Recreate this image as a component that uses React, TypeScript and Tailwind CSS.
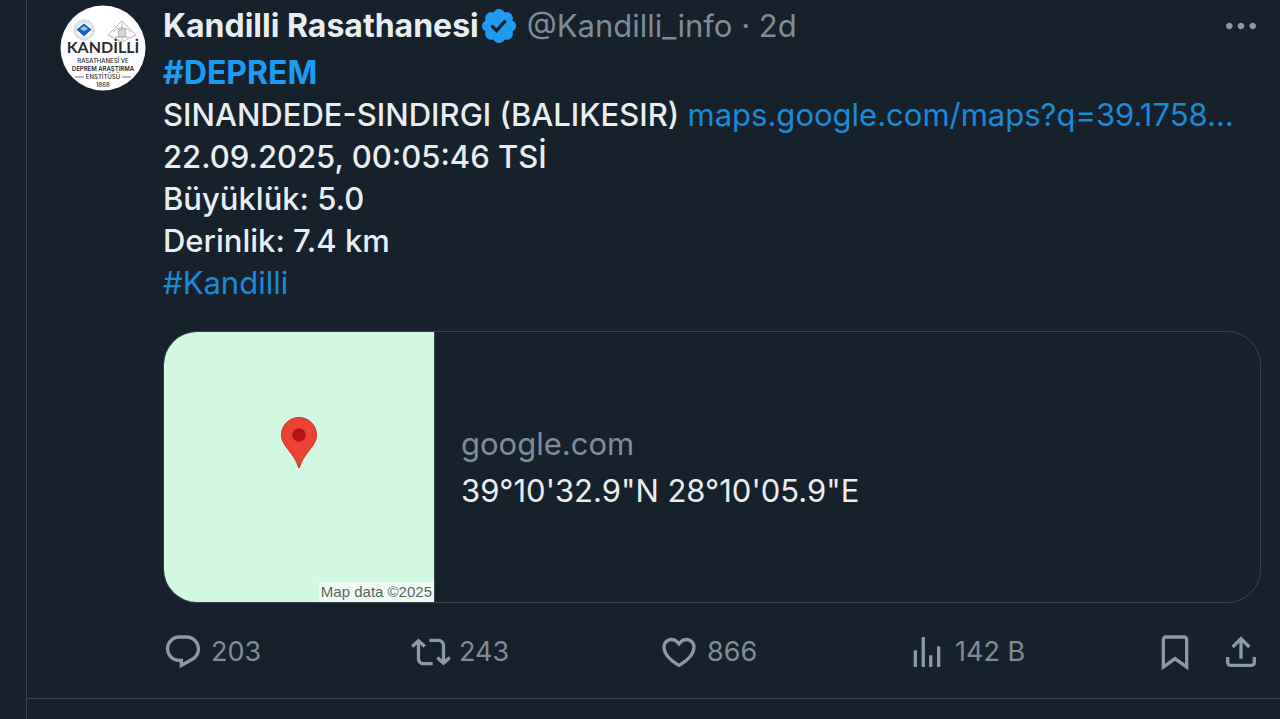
import { useState } from 'react';
import type { ReactNode } from 'react';

const ICONS = {
  reply:
    'M1.751 10c0-4.42 3.584-8 8.005-8h4.366c4.49 0 8.129 3.64 8.129 8.13 0 2.96-1.607 5.68-4.196 7.11l-8.054 4.46v-3.69h-.067c-4.49.1-8.183-3.51-8.183-8.01zm8.005-6c-3.317 0-6.005 2.69-6.005 6 0 3.37 2.77 6.08 6.138 6.01l.351-.01h1.761v2.3l5.087-2.81c1.951-1.08 3.163-3.13 3.163-5.36 0-3.39-2.744-6.13-6.129-6.13H9.756z',
  repost:
    'M4.5 3.88l4.432 4.14-1.364 1.46L5.5 7.55V16c0 1.1.896 2 2 2H13v2H7.5c-2.209 0-4-1.79-4-4V7.55L1.432 9.48.068 8.02 4.5 3.88zM16.5 6H11V4h5.5c2.209 0 4 1.79 4 4v8.45l2.068-1.93 1.364 1.46-4.432 4.14-4.432-4.14 1.364-1.46 2.068 1.93V8c0-1.1-.896-2-2-2z',
  like:
    'M16.697 5.5c-1.222-.06-2.679.51-3.89 2.16l-.805 1.09-.806-1.09C9.984 6.01 8.526 5.44 7.304 5.5c-1.243.07-2.349.78-2.91 1.91-.552 1.12-.633 2.78.479 4.82 1.074 1.97 3.257 4.27 7.129 6.61 3.87-2.34 6.052-4.64 7.126-6.61 1.111-2.04 1.03-3.7.477-4.82-.561-1.13-1.666-1.84-2.908-1.91zm4.187 7.69c-1.351 2.48-4.001 5.12-8.379 7.67l-.503.3-.504-.3c-4.379-2.55-7.029-5.19-8.382-7.67-1.36-2.5-1.41-4.86-.514-6.67.887-1.79 2.647-2.91 4.601-3.01 1.651-.09 3.368.56 4.798 2.01 1.429-1.45 3.146-2.1 4.796-2.01 1.954.1 3.714 1.22 4.601 3.01.896 1.81.846 4.17-.514 6.67z',
  views: 'M8.75 21V3h2v18h-2zM18 21V8.5h2V21h-2zM4 21l.004-10h2L6 21H4zm9.248 0v-7h2v7h-2z',
  bookmark:
    'M4 4.5C4 3.12 5.119 2 6.5 2h11C18.881 2 20 3.12 20 4.5v18.44l-8-5.71-8 5.71V4.5zM6.5 4c-.276 0-.5.22-.5.5v14.56l6-4.29 6 4.29V4.5c0-.28-.224-.5-.5-.5h-11z',
  share:
    'M12 2.59l5.7 5.7-1.41 1.42L13 6.41V16h-2V6.41l-3.3 3.3-1.41-1.42L12 2.59zM21 15l-.02 3.51c0 1.38-1.12 2.49-2.5 2.49H5.5C4.11 21 3 19.88 3 18.5V15h2v3.5c0 .28.22.5.5.5h12.98c.28 0 .5-.22.5-.5L19 15h2z',
  more: 'M3 12c0-1.1.9-2 2-2s2 .9 2 2-.9 2-2 2-2-.9-2-2zm9 2c1.1 0 2-.9 2-2s-.9-2-2-2-2 .9-2 2 .9 2 2 2zm7 0c1.1 0 2-.9 2-2s-.9-2-2-2-2 .9-2 2 .9 2 2 2z',
};

const stats = [
  { id: 'reply', label: 'Reply', count: '203' },
  { id: 'repost', label: 'Repost', count: '243' },
  { id: 'like', label: 'Like', count: '866' },
  { id: 'views', label: 'Views', count: '142 B' },
] as const;

function Icon({ name }: { name: keyof typeof ICONS }) {
  return (
    <svg viewBox="0 0 24 24" fill="currentColor" aria-hidden="true" className="size-10 shrink-0">
      <path d={ICONS[name]} />
    </svg>
  );
}

function VerifiedBadge() {
  return (
    <svg viewBox="0 0 22 22" fill="currentColor" aria-hidden="true" className="size-10 shrink-0 text-[#1d9bf0]">
      <path d="M20.396 11c-.018-.646-.215-1.275-.57-1.816-.354-.54-.852-.972-1.438-1.246.223-.607.27-1.264.14-1.897-.131-.634-.437-1.218-.882-1.687-.47-.445-1.053-.75-1.687-.882-.633-.13-1.29-.083-1.897.14-.273-.587-.704-1.086-1.245-1.44S11.647 1.62 11 1.604c-.646.017-1.273.213-1.813.568s-.969.854-1.24 1.44c-.608-.223-1.267-.272-1.902-.14-.635.13-1.22.436-1.69.882-.445.47-.749 1.055-.878 1.688-.13.633-.08 1.29.144 1.896-.587.274-1.087.705-1.443 1.245-.356.54-.555 1.17-.574 1.817.02.647.218 1.276.574 1.817.356.54.856.972 1.443 1.245-.224.606-.274 1.263-.144 1.896.13.634.433 1.218.877 1.688.47.443 1.054.747 1.687.878.633.132 1.29.084 1.897-.136.274.586.705 1.084 1.246 1.439.54.354 1.17.551 1.816.569.647-.016 1.276-.213 1.817-.567s.972-.854 1.245-1.44c.604.239 1.266.296 1.903.164.636-.132 1.22-.447 1.68-.907.46-.46.776-1.044.908-1.681s.075-1.299-.165-1.903c.586-.274 1.084-.705 1.439-1.246.354-.54.551-1.17.569-1.816zM9.662 14.85l-3.429-3.428 1.293-1.302 2.072 2.072 4.4-4.794 1.347 1.246z" />
    </svg>
  );
}

function Avatar() {
  return (
    <svg viewBox="0 0 86 86" className="size-[86px]" role="img" aria-label="Kandilli Rasathanesi">
      <circle cx="43" cy="43" r="42.5" fill="#fff" />
      {/* university seal */}
      <circle cx="24" cy="25" r="10" fill="#dfe6ee" stroke="#b9c6d6" strokeWidth="1" strokeDasharray="2 1" />
      <circle cx="24" cy="25" r="7" fill="#fff" />
      <path d="M24 18.5l7.5 6-7.5 7-7.5-7z" fill="#1b5fae" />
      <path d="M20 24l4-3 4 3-4 2z" fill="#8fc4ea" />
      {/* observatory emblem */}
      <g fill="none" stroke="#b4b4b4" strokeWidth="1">
        <path d="M62 16L76 30 62 37 48 30z" />
        <path d="M53 27q9-9 18 0M55 32h14M62 18v18M57 23l10 10M67 23L57 33" />
        <circle cx="62" cy="28" r="4" fill="#d5d5d5" />
      </g>
      <g fill="#2b2b33" textAnchor="middle" fontFamily="Lato, sans-serif">
        <text x="43" y="48" fontSize="16" fontWeight="700">KANDİLLİ</text>
        <g fontFamily="Inter, sans-serif" fontSize="6" fontWeight="500">
          <text x="43" y="58">RASATHANESİ VE</text>
          <text x="43" y="66" fontWeight="600">DEPREM ARAŞTIRMA</text>
          <text x="43" y="74">ENSTİTÜSÜ</text>
          <text x="43" y="82">1868</text>
        </g>
      </g>
      <path d="M15 72h9M62 72h9" stroke="#777" strokeWidth="1" />
    </svg>
  );
}

function MapPin() {
  return (
    <svg viewBox="0 0 36 52" className="h-[52px] w-9" aria-hidden="true">
      <path
        d="M18 .5C8.3.5.5 8.2.5 17.8c0 6 3 10.2 7 15.2 4.500 5.700 8 10.500 10.100 17.500.1.600.700.600.8 0C20.500 43.500 24 38.700 28.500 33c4-5 7-9.200 7-15.200C35.500 8.200 27.700.5 18 .5z"
        fill="#ea4335"
        stroke="#c5352a"
        strokeWidth="1"
      />
      <circle cx="18" cy="18" r="6.8" fill="#b31412" />
    </svg>
  );
}

function TextLink({ children, bold = false }: { children: ReactNode; bold?: boolean }) {
  return (
    <a href="#" className={bold ? 'text-[32px] font-bold text-[#1d9bf0]' : 'font-normal text-[#1b8ad6]'}>
      {children}
    </a>
  );
}

export default function App() {
  const [active, setActive] = useState<string | null>(null);

  return (
    <div className="min-h-screen bg-[#17212c] pl-[26px] font-['Inter',sans-serif] text-[#e9edef]">
      <main className="min-h-screen border-l border-[#38444d]">
        <article className="flex gap-[17px] border-b border-[#38444d] pt-[5px] pr-[19px] pb-[26px] pl-[33px]">
          <div className="shrink-0">
            <Avatar />
          </div>

          <div className="min-w-0 flex-1">
            <header className="flex h-[42px] items-center justify-between text-[31px] leading-[42px]">
              <div className="flex min-w-0 items-center whitespace-nowrap">
                <span className="text-[32px] font-bold">Kandilli Rasathanesi</span>
                <VerifiedBadge />
                <span className="ml-2 text-[#7f8b97]">@Kandilli_info · 2d</span>
              </div>
              <button type="button" aria-label="More" className="text-[#8b98a5]">
                <Icon name="more" />
              </button>
            </header>

            <div className="mt-[5px] text-[31px] leading-[42px] font-medium">
              <p>
                <TextLink bold>#DEPREM</TextLink>
              </p>
              <p className="truncate">
                SINANDEDE-SINDIRGI (BALIKESIR) <TextLink>maps.google.com/maps?q=39.1758…</TextLink>
              </p>
              <p>22.09.2025, 00:05:46 TSİ</p>
              <p>Büyüklük: 5.0</p>
              <p>Derinlik: 7.4 km</p>
              <p>
                <TextLink>#Kandilli</TextLink>
              </p>
            </div>

            {/* Link card */}
            <a href="#" className="mt-[27px] flex overflow-hidden rounded-[34px] border border-[#38444d]">
              <div className="relative flex size-[270px] shrink-0 items-center justify-center bg-[#d3f8e2] pb-12">
                <MapPin />
                <span className="absolute right-0 bottom-0 bg-[#f1fbf5] px-[2px] font-['Liberation_Sans',sans-serif] text-[15px] leading-[20px] text-[#5a6660]">
                  Map data ©2025
                </span>
              </div>
              <div className="flex flex-1 flex-col justify-center gap-[5px] border-l border-[#38444d] px-[26px] text-[31px] leading-[42px]">
                <span className="text-[#7f8b97]">google.com</span>
                <span>39°10'32.9"N 28°10'05.9"E</span>
              </div>
            </a>

            {/* Actions */}
            <div className="mt-[29px] flex items-center text-[#8b98a5]">
              {stats.map((stat) => (
                <div key={stat.id} className="flex flex-1">
                  <button
                    type="button"
                    aria-label={stat.label}
                    aria-pressed={active === stat.id}
                    onClick={() => setActive(stat.id)}
                    className="flex items-center gap-2"
                  >
                    <Icon name={stat.id} />
                    <span className="text-[27px] leading-[40px] text-[#7f8b97]">{stat.count}</span>
                  </button>
                </div>
              ))}
              <div className="flex gap-[26px]">
                <button type="button" aria-label="Bookmark">
                  <Icon name="bookmark" />
                </button>
                <button type="button" aria-label="Share">
                  <Icon name="share" />
                </button>
              </div>
            </div>
          </div>
        </article>
      </main>
    </div>
  );
}
